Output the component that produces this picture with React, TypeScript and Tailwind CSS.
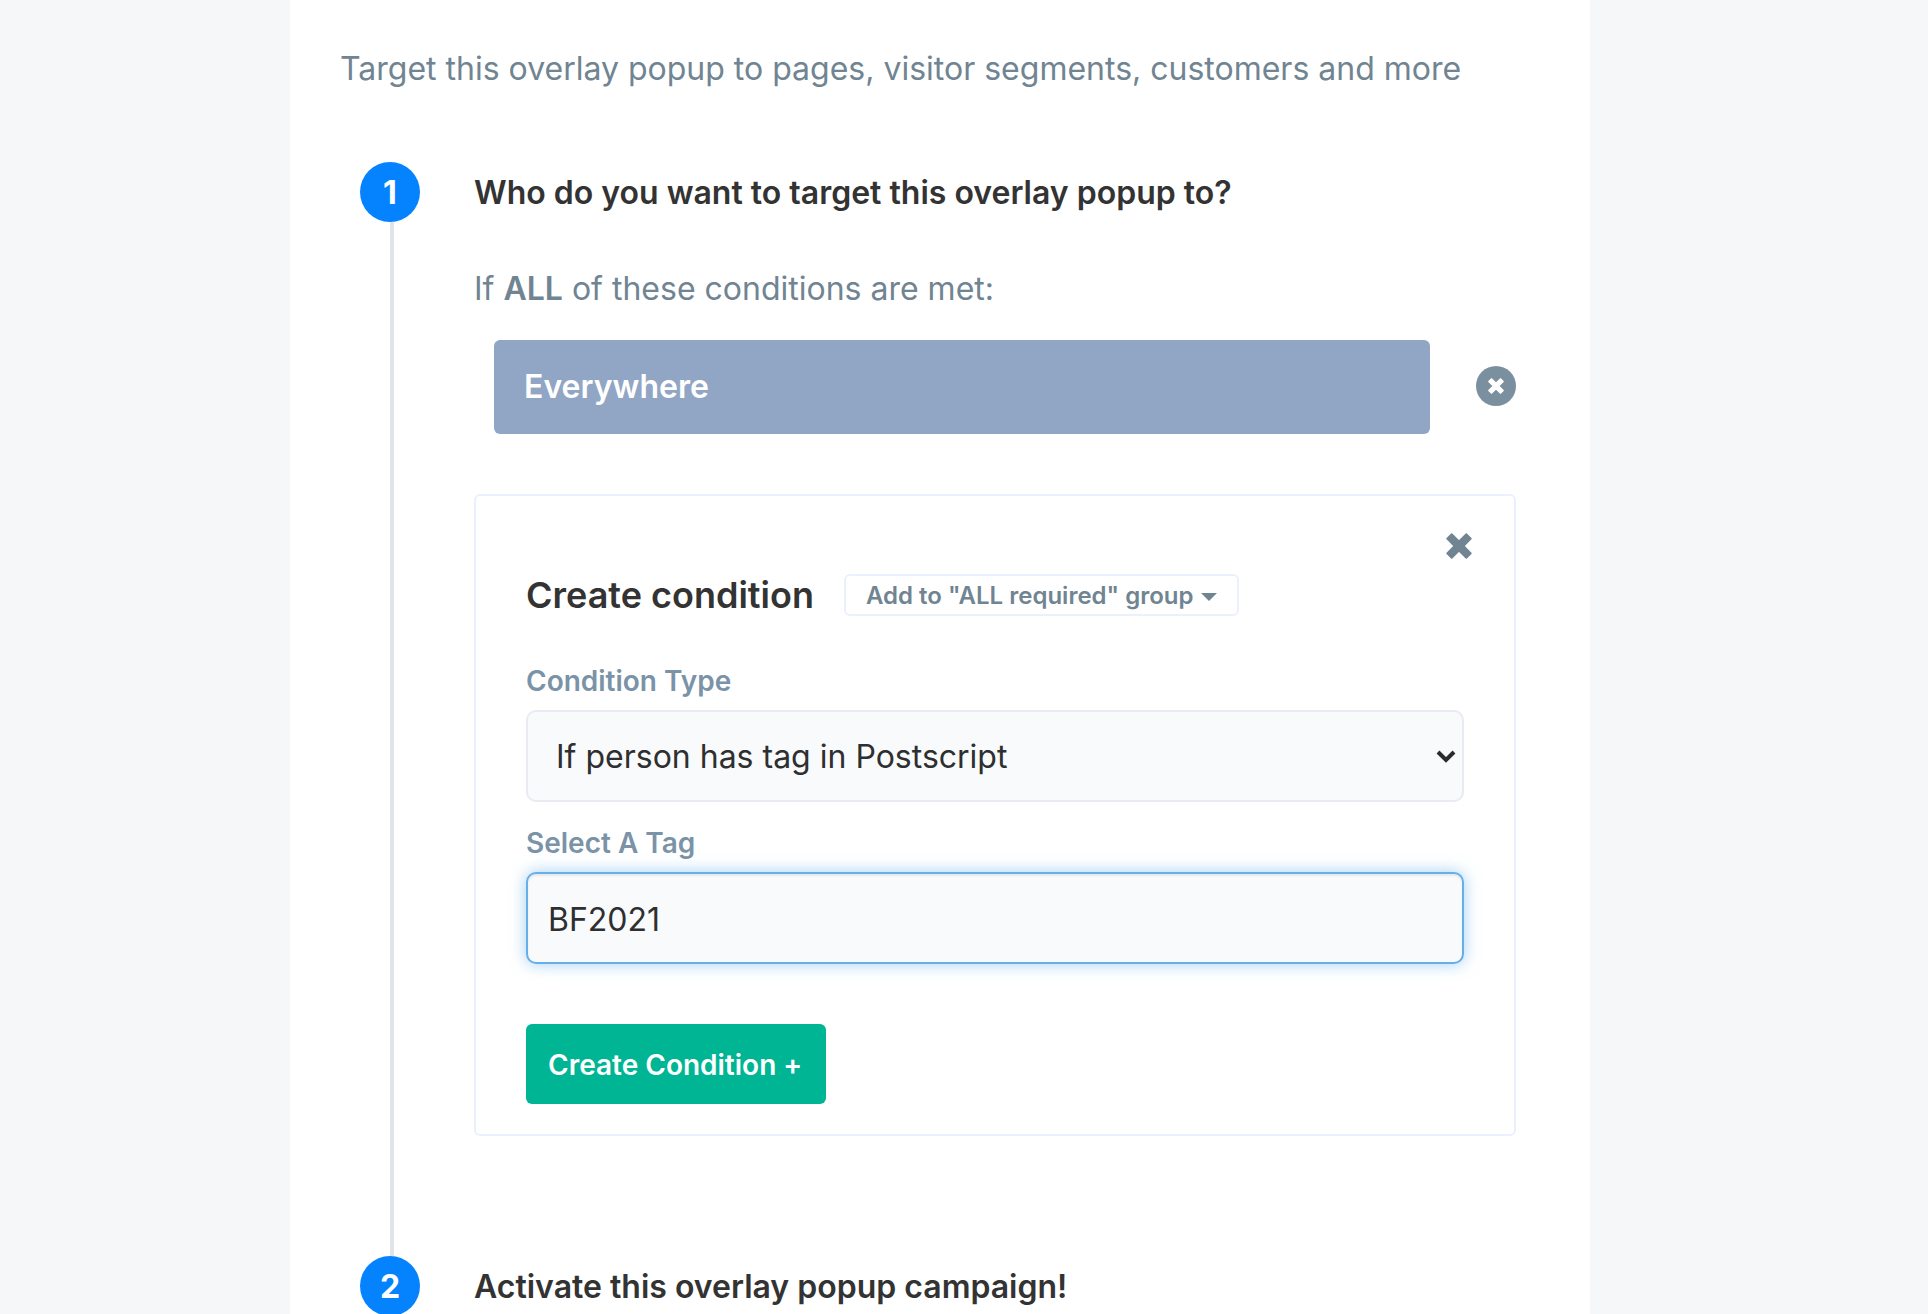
import { useState, type ReactNode } from "react";

function TimesIcon({ className }: { className: string }) {
  return (
    <svg
      viewBox="0 0 26 26"
      className={className}
      fill="currentColor"
      stroke="currentColor"
      strokeWidth="1.8"
      strokeLinejoin="round"
      aria-hidden="true"
    >
      <path d="M1.2 5.7L5.7 1.2 13 8.5l7.3-7.3 4.5 4.5L17.5 13l7.3 7.3-4.5 4.5L13 17.5l-7.3 7.3-4.5-4.5L8.5 13z" />
    </svg>
  );
}

function Step({
  number,
  title,
  connected,
  children,
}: {
  number: number;
  title: string;
  connected?: boolean;
  children?: ReactNode;
}) {
  return (
    <li className="flex gap-[54px]">
      <div className="flex w-[60px] shrink-0 flex-col items-center">
        <span className="flex size-[60px] shrink-0 items-center justify-center rounded-full bg-[#0583ff] pt-0.5 text-[32px] leading-none font-bold text-white">
          {number}
        </span>
        {connected && <span className="ml-1 w-1 flex-1 bg-[#dee4e9]" />}
      </div>
      <div className="min-w-0 flex-1">
        <h2 className="text-[32px] leading-[62px] font-semibold text-[#333333]">{title}</h2>
        {children}
      </div>
    </li>
  );
}

export default function App() {
  const [tag, setTag] = useState("BF2021");

  return (
    <div className="min-h-screen bg-[#f5f7f9] pr-12 font-['Inter',sans-serif]">
      <main className="mx-auto min-h-screen max-w-[1300px] bg-white pt-[45px] pr-[74px] pl-[50px]">
        <p className="text-[32px] leading-[48px] text-[#708492]">
          Target this overlay popup to pages, visitor segments, customers and more
        </p>

        <ol className="mt-[69px] pl-5">
          <Step number={1} title="Who do you want to target this overlay popup to?" connected>
            <p className="mt-[41px] text-[32px] leading-[48px] text-[#708492]">
              If <strong className="font-semibold">ALL</strong> of these conditions are met:
            </p>

            <div className="mt-[27px] flex items-center gap-[46px] pl-5">
              <div className="flex h-[94px] flex-1 items-center rounded-md bg-[#91a5c5] px-[30px] text-[32px] font-semibold text-white">
                Everywhere
              </div>
              <button
                type="button"
                aria-label="Remove condition"
                className="mb-0.5 flex size-10 items-center justify-center rounded-full bg-[#7b909f] text-white"
              >
                <TimesIcon className="size-4" />
              </button>
            </div>

            <form
              className="relative mt-[60px] mb-[120px] rounded-md border-2 border-[#ebf1fc] px-[50px] pt-[78px] pb-[30px]"
              onSubmit={(event) => event.preventDefault()}
            >
              <button
                type="button"
                aria-label="Close"
                className="absolute top-[37px] right-[42px] text-[#708492]"
              >
                <TimesIcon className="size-[26px]" />
              </button>

              <div className="flex items-center gap-[30px]">
                <h3 className="text-4xl leading-[42px] font-semibold text-[#333333]">Create condition</h3>
                <button
                  type="button"
                  className="flex h-[42px] items-center gap-2 rounded-md border-2 border-[#ebf1fc] px-5 pt-0.5 text-2xl font-semibold text-[#708492]"
                >
                  Add to "ALL required" group
                  <svg viewBox="0 0 16 8" className="mt-0.5 h-2 w-4" fill="currentColor" aria-hidden="true">
                    <path d="M0 0h16L8 8z" />
                  </svg>
                </button>
              </div>

              <label htmlFor="condition-type" className="mt-[47px] block text-[28px] leading-9 font-semibold text-[#7b93a7]">
                Condition Type
              </label>
              <div className="relative mt-[11px]">
                <select
                  id="condition-type"
                  className="h-[92px] w-full appearance-none rounded-[10px] border-2 border-[#e8ebf1] bg-[#f9fafc] px-7 pt-0.5 text-[32px] text-[#2e2f30]"
                >
                  <option>If person has tag in Postscript</option>
                </select>
                <svg
                  viewBox="0 0 20 13"
                  className="pointer-events-none absolute top-10 right-2 h-[13px] w-5"
                  fill="none"
                  stroke="#2b2b2b"
                  strokeWidth="4"
                  aria-hidden="true"
                >
                  <path d="M2 2l8 8 8-8" />
                </svg>
              </div>

              <label htmlFor="tag" className="mt-[23px] block text-[28px] leading-9 font-semibold text-[#7b93a7]">
                Select A Tag
              </label>
              <input
                id="tag"
                type="text"
                value={tag}
                onChange={(event) => setTag(event.target.value)}
                className="mt-[11px] h-[92px] w-full rounded-[10px] border-2 border-[#66afe9] bg-[#f9fafc] px-5 pt-0.5 text-[32px] text-[#2e2f30] shadow-[inset_0_2px_2px_rgba(0,0,0,0.075),0_0_16px_rgba(102,175,233,0.6)] outline-none"
              />

              <button
                type="submit"
                className="mt-[60px] block h-20 min-w-[300px] rounded-md bg-[#00b594] px-[22px] pt-0.5 text-left text-[28px] font-semibold text-white"
              >
                Create Condition +
              </button>
            </form>
          </Step>
          <Step number={2} title="Activate this overlay popup campaign!" />
        </ol>
      </main>
    </div>
  );
}
